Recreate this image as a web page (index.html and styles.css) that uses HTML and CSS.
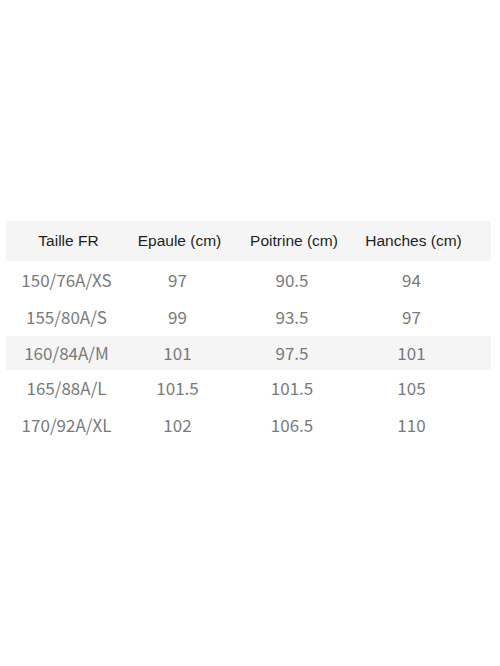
FILE: index.html
```html
<!DOCTYPE html>
<html lang="fr">
<head>
<meta charset="utf-8">
<title>Tableau des tailles</title>
<link rel="stylesheet" href="styles.css">
</head>
<body>
<table class="size-table">
  <colgroup>
    <col class="c1"><col class="c2"><col class="c3"><col class="c4">
  </colgroup>
  <thead>
    <tr class="head">
      <th>Taille FR</th>
      <th>Epaule (cm)</th>
      <th>Poitrine (cm)</th>
      <th class="last">Hanches (cm)</th>
    </tr>
  </thead>
  <tbody>
    <tr class="r1"><td>150/76A/XS</td><td>97</td><td>90.5</td><td class="last">94</td></tr>
    <tr class="r2"><td>155/80A/S</td><td>99</td><td>93.5</td><td class="last">97</td></tr>
    <tr class="r3 shade"><td>160/84A/M</td><td>101</td><td>97.5</td><td class="last">101</td></tr>
    <tr class="r4"><td>165/88A/L</td><td>101.5</td><td>101.5</td><td class="last">105</td></tr>
    <tr class="r5"><td>170/92A/XL</td><td>102</td><td>106.5</td><td class="last">110</td></tr>
  </tbody>
</table>
</body>
</html>
```
FILE: styles.css
```css
html, body {
  margin: 0;
  padding: 0;
  background: #ffffff;
}

body {
  padding-top: 221px;
  padding-left: 6px;
}

.size-table {
  width: 485px;
  table-layout: fixed;
  border-collapse: collapse;
  border-spacing: 0;
}

.c1 { width: 121px; }
.c2 { width: 101px; }
.c3 { width: 128px; }
.c4 { width: 135px; }

.size-table th,
.size-table td {
  padding: 0;
  text-align: center;
  white-space: nowrap;
}

.size-table th.last,
.size-table td.last {
  padding-right: 24px;
}

.head {
  background: #f5f5f5;
  height: 40px;
}

.head th {
  font-family: "Liberation Sans", Arial, sans-serif;
  font-size: 15.5px;
  font-weight: normal;
  color: #1e1e1e;
  padding-left: 4px;
}

.size-table td {
  font-family: "Noto Sans CJK SC", "Noto Sans", sans-serif;
  font-size: 17px;
  font-weight: 400;
  color: #7a7a7a;
  padding-bottom: 2px;
}

.r1 { height: 38px; }
.r2 { height: 37px; }
.r3 { height: 34px; }
.r4 { height: 36px; }
.r5 { height: 38px; }

.shade {
  background: #f5f5f5;
}
```
